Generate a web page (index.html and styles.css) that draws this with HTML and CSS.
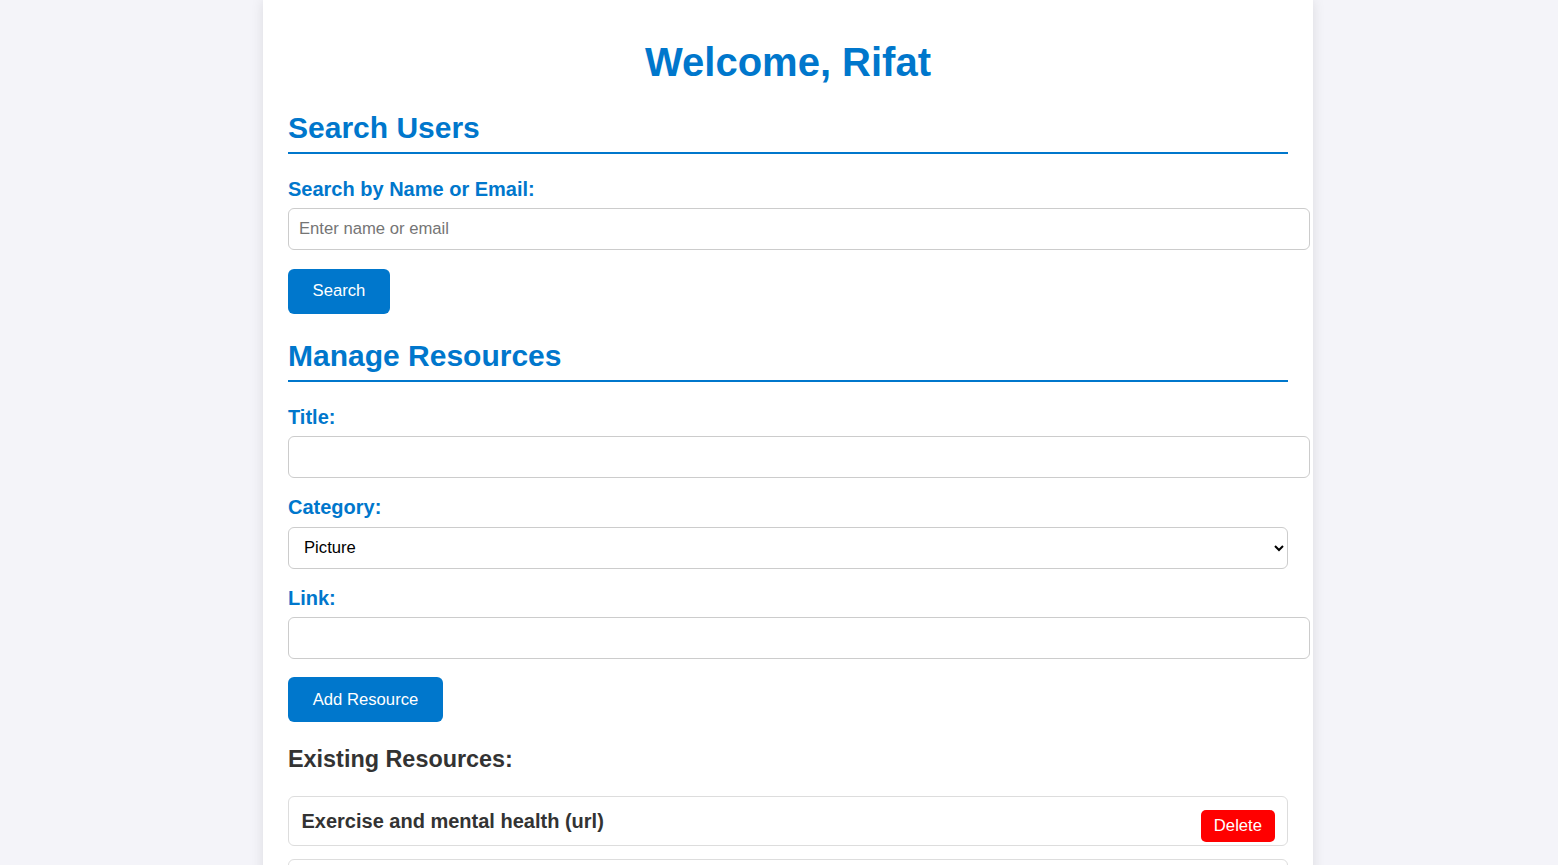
FILE: index.html
```html
<!DOCTYPE html>
<html lang="en">
<head>
<meta charset="utf-8">
<title>Admin Dashboard</title>
<link rel="stylesheet" href="styles.css">
</head>
<body>
<div class="page">
  <main class="container">
    <h1 class="welcome">Welcome, Rifat</h1>

    <section class="section section-search">
      <h2 class="section-title">Search Users</h2>
      <label class="field-label" for="search">Search by Name or Email:</label>
      <input class="text-input" id="search" type="text" placeholder="Enter name or email">
      <button class="btn btn-search" type="button">Search</button>
    </section>

    <section class="section section-manage">
      <h2 class="section-title">Manage Resources</h2>
      <label class="field-label" for="title">Title:</label>
      <input class="text-input" id="title" type="text">
      <label class="field-label" for="category">Category:</label>
      <select class="select-input" id="category">
        <option>Picture</option>
        <option>Video</option>
        <option>Article</option>
      </select>
      <label class="field-label" for="link">Link:</label>
      <input class="text-input" id="link" type="text">
      <button class="btn btn-add" type="button">Add Resource</button>

      <h3 class="list-title">Existing Resources:</h3>
      <ul class="resource-list">
        <li class="resource-item">
          <button class="btn-delete" type="button">Delete</button>
          <strong class="resource-name">Exercise and mental health (url)</strong>
        </li>
        <li class="resource-item">
          <button class="btn-delete" type="button">Delete</button>
          <strong class="resource-name">Mindfulness for beginners (video)</strong>
        </li>
      </ul>
    </section>
  </main>
</div>
</body>
</html>
```

FILE: styles.css
```css
html, body {
  margin: 0;
  padding: 0;
  height: 100%;
  overflow: hidden;
}

body {
  background: #f4f4f9;
  font-family: "Liberation Sans", Arial, sans-serif;
  color: #333;
}

.page {
  padding-left: 18px;
}

.container {
  width: 1000px;
  margin: 0 auto;
  padding: 39px 25px 40px;
  background: #fff;
  box-shadow: 0 0 12px rgba(0, 0, 0, 0.1);
  min-height: 1000px;
}

.welcome {
  margin: 0 0 26.4px;
  font-size: 40px;
  line-height: 46px;
  text-align: center;
  color: #0077cc;
}

.section-title {
  margin: 0 0 24.5px;
  font-size: 30px;
  line-height: 34.5px;
  color: #0077cc;
  padding-bottom: 6.25px;
  border-bottom: 2px solid #0077cc;
}

.section-search .section-title {
  margin-bottom: 23.5px;
}

.field-label {
  display: block;
  margin-bottom: 7.3px;
  font-size: 20px;
  line-height: 23px;
  font-weight: bold;
  color: #0077cc;
}

.text-input {
  display: block;
  width: 100%;
  box-sizing: content-box;
  margin: 0 0 18px;
  padding: 10px;
  font-family: "Liberation Sans", Arial, sans-serif;
  font-size: 16.67px;
  line-height: 20px;
  height: 20px;
  border: 1px solid #ccc;
  border-radius: 6px;
  color: #333;
  background: #fff;
  outline: none;
}

.text-input::placeholder {
  color: #757575;
}

.select-input {
  display: block;
  width: 100%;
  box-sizing: border-box;
  height: 42px;
  margin: 0 0 18px;
  padding: 0 8px 0 11px;
  font-family: "Liberation Sans", Arial, sans-serif;
  font-size: 16.67px;
  color: #000;
  border: 1px solid #ccc;
  border-radius: 6px;
  background: #fff;
}

.btn {
  display: block;
  height: 45px;
  padding: 0;
  border: none;
  border-radius: 6px;
  background: #0077cc;
  color: #fff;
  font-family: "Liberation Sans", Arial, sans-serif;
  font-size: 16.67px;
  cursor: pointer;
}

.btn-search {
  margin: 19px 0 25px;
  width: 102px;
}

.btn-add {
  margin: 0 0 23.7px;
  width: 155px;
}

.list-title {
  margin: 0 0 23.4px;
  font-size: 23.4px;
  line-height: 26.9px;
  color: #333;
}

.resource-list {
  list-style: none;
  margin: 0;
  padding: 0;
}

.resource-item {
  padding: 12.5px;
  margin-bottom: 13px;
  border: 1px solid #ddd;
  border-radius: 6px;
  background: #fff;
  height: 23px;
}

.resource-name {
  font-size: 20px;
  line-height: 23px;
  color: #333;
}

.btn-delete {
  float: right;
  margin-top: 0.5px;
  height: 32px;
  padding: 0 12.5px;
  border: none;
  border-radius: 5px;
  background: #ff0000;
  color: #fff;
  font-family: "Liberation Sans", Arial, sans-serif;
  font-size: 16.67px;
  cursor: pointer;
}
```
